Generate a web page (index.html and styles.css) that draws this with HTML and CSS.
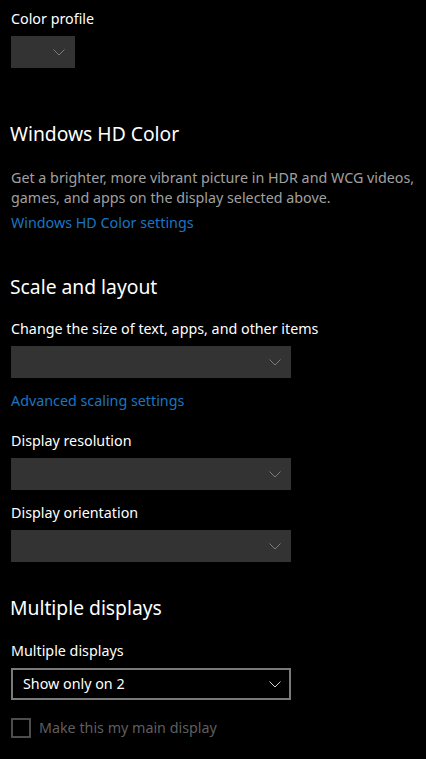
FILE: index.html
```html
<!DOCTYPE html>
<html>
<head>
<meta charset="utf-8">
<link rel="stylesheet" href="styles.css">
</head>
<body>
<div class="page">
  <div class="label first">Color profile</div>
  <div class="combo small disabled">
    <svg class="chev" width="12" height="7" viewBox="0 0 12 7"><polyline points="0.5,0.5 6,6 11.5,0.5" fill="none" stroke="currentColor" stroke-width="1"/></svg>
  </div>

  <h2 class="heading h-hd">Windows HD Color</h2>
  <p class="desc">Get a brighter, more vibrant picture in HDR and WCG videos, games, and apps on the display selected above.</p>
  <a class="link l-hd">Windows HD Color settings</a>

  <h2 class="heading h-scale">Scale and layout</h2>
  <div class="label l-size">Change the size of text, apps, and other items</div>
  <div class="combo wide disabled">
    <svg class="chev" width="12" height="7" viewBox="0 0 12 7"><polyline points="0.5,0.5 6,6 11.5,0.5" fill="none" stroke="currentColor" stroke-width="1"/></svg>
  </div>
  <a class="link l-adv">Advanced scaling settings</a>

  <div class="label l-res">Display resolution</div>
  <div class="combo wide disabled">
    <svg class="chev" width="12" height="7" viewBox="0 0 12 7"><polyline points="0.5,0.5 6,6 11.5,0.5" fill="none" stroke="currentColor" stroke-width="1"/></svg>
  </div>
  <div class="label l-orient">Display orientation</div>
  <div class="combo wide disabled">
    <svg class="chev" width="12" height="7" viewBox="0 0 12 7"><polyline points="0.5,0.5 6,6 11.5,0.5" fill="none" stroke="currentColor" stroke-width="1"/></svg>
  </div>

  <h2 class="heading h-multi">Multiple displays</h2>
  <div class="label l-multi">Multiple displays</div>
  <div class="combo wide active">
    <span class="value">Show only on 2</span>
    <svg class="chev" width="12" height="7" viewBox="0 0 12 7"><polyline points="0.5,0.5 6,6 11.5,0.5" fill="none" stroke="currentColor" stroke-width="1"/></svg>
  </div>
  <label class="check">
    <span class="box"></span>
    <span class="check-text">Make this my main display</span>
  </label>
</div>
</body>
</html>
```
FILE: styles.css
```css
html, body {
  margin: 0;
  padding: 0;
  background: #000;
}
body {
  font-family: "Noto Sans", "Open Sans", sans-serif;
  font-size: 14.3px;
  line-height: 20px;
  color: #fff;
}
.page {
  padding: 7px 0 0 11px;
}
.label {
  display: block;
  color: #fff;
  height: 19px;
  padding-top: 1px;
}
.first { margin-bottom: 9px; padding-top: 2px; height: 18px; }
.combo {
  box-sizing: border-box;
  height: 32px;
  background: #333;
  display: flex;
  align-items: center;
  justify-content: flex-end;
  padding-right: 10px;
}
.combo.small { width: 64px; }
.combo.wide { width: 280px; }
.combo.disabled .chev { color: #7c7c7c; }
.combo.active {
  background: #000;
  border: 2px solid #7a7a7a;
  justify-content: space-between;
  padding-left: 10px;
  padding-right: 8px;
}
.combo.active .chev { color: #cfcfcf; }
.value { color: #fff; }
.chev { display: block; }
.heading {
  font-size: 19.3px;
  font-weight: normal;
  line-height: 28px;
  height: 26px;
  padding-top: 2px;
  margin: 0;
  margin-left: -1px;
  color: #fff;
}
.h-hd { margin-top: 50px; }
.desc {
  margin: 22px 0 0;
  color: #a0a0a0;
  width: 412px;
}
.link {
  display: block;
  color: #1a76c4;
  margin-top: 5px;
  height: 19px;
  padding-top: 1px;
}
.l-hd { margin-top: 4px; }
.h-scale { margin-top: 39px; }
.l-size { margin-top: 19px; margin-bottom: 8px; }
.l-adv { margin-top: 12px; }
.l-res { margin-top: 20px; margin-bottom: 8px; }
.l-orient { margin-top: 12px; margin-bottom: 8px; }
.h-multi { margin-top: 30px; }
.l-multi { margin-top: 19px; margin-bottom: 9px; padding-top: 2px; height: 18px; }
.check {
  display: flex;
  align-items: center;
  gap: 8px;
  margin-top: 18px;
  height: 20px;
}
.box {
  box-sizing: border-box;
  width: 20px;
  height: 20px;
  border: 2px solid #4d4d4d;
}
.check-text { color: #5f5f5f; }
```
